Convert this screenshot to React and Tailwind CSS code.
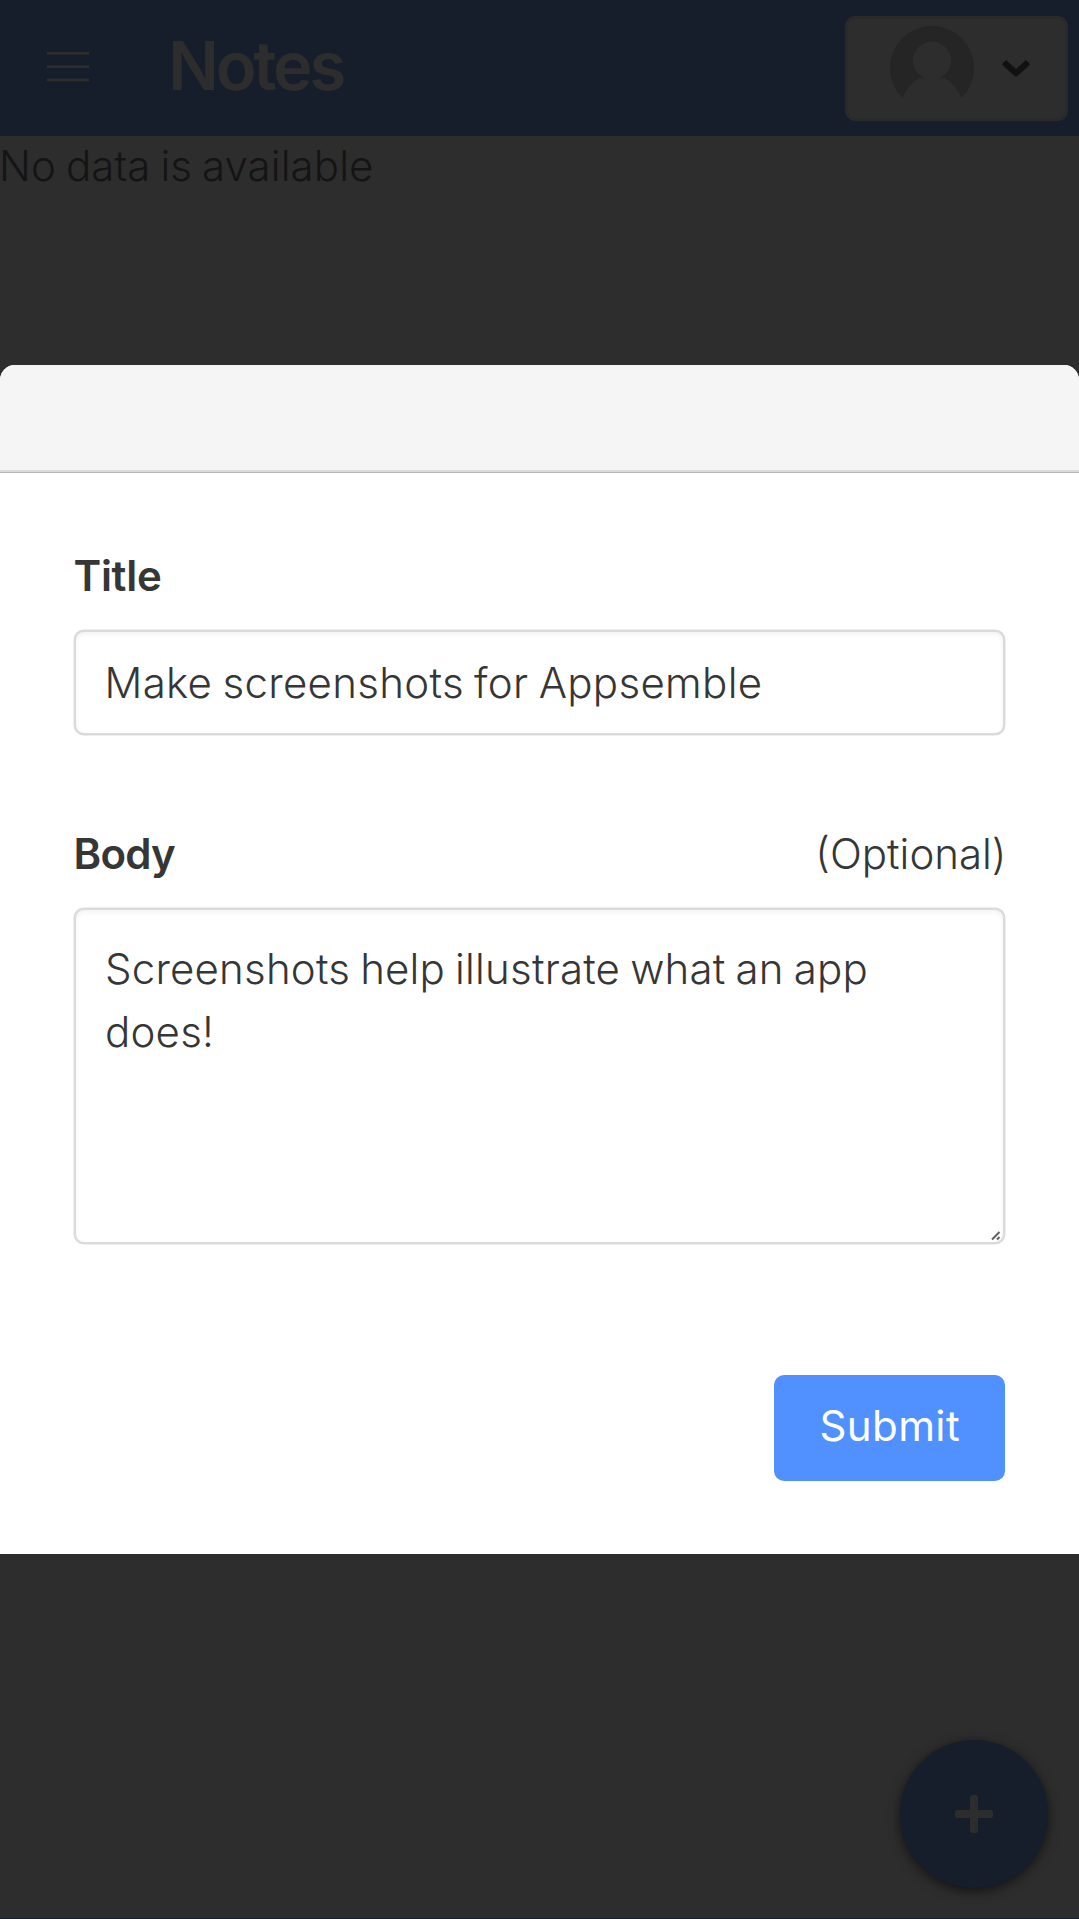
function Header() {
  return (
    <header className="flex h-[136px] shrink-0 items-center bg-[#161d2b] pr-[11px] pl-[47px]">
      <svg width="42" height="30" viewBox="0 0 42 30" fill="#2d2d2d" className="-mt-0.5">
        <rect y="0" width="42" height="2.7" />
        <rect y="13.3" width="42" height="2.7" />
        <rect y="26.6" width="42" height="2.7" />
      </svg>
      <h1 className="-mt-[4px] ml-[79px] flex-1 text-[67px] leading-[80px] font-semibold tracking-[-3.2px] text-[#2d2d2d]">
        Notes
      </h1>
      <button className="flex h-[105px] w-[223px] items-start rounded-[10px] border-[3px] border-[#2a2a2a] bg-[#2d2d2d] pt-[7px] pl-[42px]">
        <svg width="84" height="84" viewBox="0 0 84 84">
          <path
            d="M12.5 72A42 42 0 1 1 71.500 72C66 60 60 53.500 51 51.200A19 19 0 1 0 33 51.200C24 53.500 18 60 12.500 72Z"
            fill="#252525"
          />
        </svg>
        <svg width="28" height="18" viewBox="0 0 28 18" className="mt-[34px] ml-[28px]">
          <path
            d="M4.200 4.200L14 13.200L23.800 4.200"
            fill="none"
            stroke="#111111"
            strokeWidth="6"
            strokeLinecap="square"
            strokeLinejoin="round"
          />
        </svg>
      </button>
    </header>
  );
}

function Modal() {
  return (
    <div className="absolute inset-x-0 top-[364.5px] h-[1189.5px] overflow-hidden rounded-t-[15px] bg-white text-[#363636]">
      <div className="h-[108.5px] border-b border-[#b5b5b5] bg-[#f5f5f5] shadow-[inset_0_-2px_0_#dbdbdb]" />
      <form className="flex flex-col pr-[74px] pl-[73.5px] leading-[63px]" onSubmit={(e) => e.preventDefault()}>
        <label htmlFor="title" className="mt-[71px] font-semibold tracking-[-0.3px]">
          Title
        </label>
        <input
          id="title"
          defaultValue="Make screenshots for Appsemble"
          className="mt-[23px] h-[105px] rounded-[10px] border-2 border-[#dbdbdb] bg-white px-[29px] font-[350] tracking-[0.32px] [word-spacing:-2px] shadow-[inset_0_2px_5px_rgba(10,10,10,0.06),0_0_0_0.5px_#dbdbdb] outline-none"
        />
        <div className="mt-[87px] flex justify-between">
          <label htmlFor="body" className="font-semibold tracking-[-0.8px]">
            Body
          </label>
          <span className="-mr-[1.5px] font-[350]">(Optional)</span>
        </div>
        <div className="relative mt-[23px] h-[335.5px]">
          <textarea
            id="body"
            defaultValue="Screenshots help illustrate what an app does!"
            className="block h-full w-full resize-none rounded-[10px] border-2 border-[#dbdbdb] bg-white px-[29.5px] py-[27px] font-[350] tracking-[0.2px] [word-spacing:-2px] shadow-[inset_0_2px_5px_rgba(10,10,10,0.06),0_0_0_0.5px_#dbdbdb] outline-none"
          />
          <svg width="10" height="10" viewBox="0 0 10 10" className="absolute right-[4px] bottom-[3px]">
            <path d="M1 8.500L8.500 1M6 8.500L8.500 6" stroke="#606060" strokeWidth="2" fill="none" />
          </svg>
        </div>
        <button className="mt-[131.5px] h-[105.5px] w-[231.5px] self-end rounded-[10px] bg-[#5191ff] pb-[4px] pl-px font-normal tracking-[0.4px] text-white">
          Submit
        </button>
      </form>
    </div>
  );
}

export default function App() {
  return (
    <div className="relative flex h-[1919px] w-[1079px] flex-col overflow-hidden border-b border-[#161d2b] bg-[#2d2d2d] font-['Inter',sans-serif] text-[42px]">
      <Header />
      <p className="-ml-px leading-[59px] font-[350] tracking-[0.1px] [word-spacing:-2px] text-[#141414]">No data is available</p>
      <Modal />
      <button className="absolute top-[1740px] left-[900px] flex size-[148px] items-center justify-center rounded-full bg-[#161d2b] shadow-[0_3px_12px_rgba(0,0,0,0.6)]">
        <svg width="38" height="38" viewBox="0 0 38 38" fill="#2d2d2d">
          <rect x="15" width="8" height="38" rx="2.5" />
          <rect y="15" width="38" height="8" rx="2.5" />
        </svg>
      </button>
    </div>
  );
}
